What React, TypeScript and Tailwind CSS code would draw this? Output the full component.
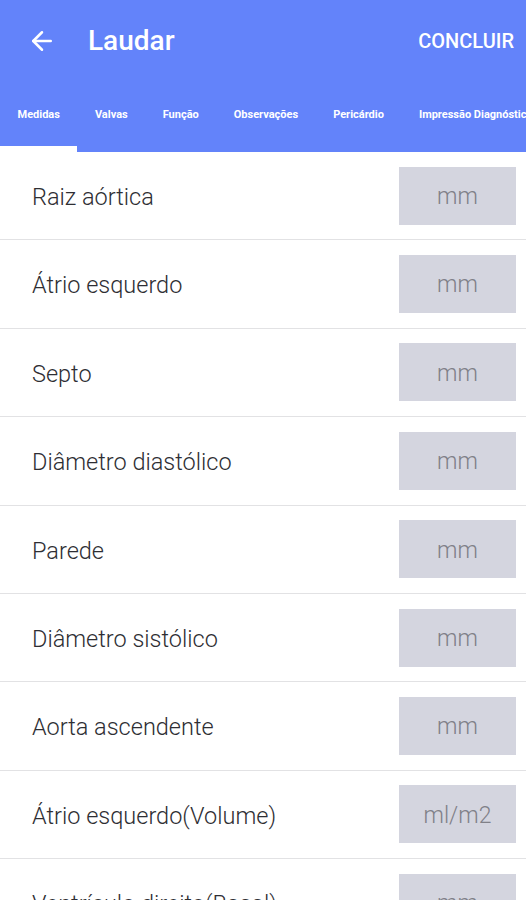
import { ArrowLeft } from "lucide-react";

const tabs = ["Medidas", "Valvas", "Função", "Observações", "Pericárdio", "Impressão Diagnóstica"];

const fields = [
    { label: "Raiz aórtica", unit: "mm" },
    { label: "Átrio esquerdo", unit: "mm" },
    { label: "Septo", unit: "mm" },
    { label: "Diâmetro diastólico", unit: "mm" },
    { label: "Parede", unit: "mm" },
    { label: "Diâmetro sistólico", unit: "mm" },
    { label: "Aorta ascendente", unit: "mm" },
    { label: "Átrio esquerdo(Volume)", unit: "ml/m2" },
    { label: "Ventrículo direito(Basal)", unit: "mm" },
];

export default function App() {
    return (
        <div className="w-[526px] h-[900px] overflow-hidden bg-white font-['Roboto',sans-serif]">
            {/* Header */}
            <header className="bg-[#6383fa] text-white">
                <div className="h-[82px] flex items-center pl-[27px] pr-[12px]">
                    <ArrowLeft className="w-[30px] h-[30px]" strokeWidth={2} />
                    <h1 className="ml-[31px] text-[28px] font-medium">Laudar</h1>
                    <button className="ml-auto text-[20px] font-medium">CONCLUIR</button>
                </div>
                <nav className="flex whitespace-nowrap overflow-hidden">
                    {tabs.map((tab, i) => (
                        <div key={tab} className="flex flex-col shrink-0">
                            <div className="h-[64px] pt-[2px] flex items-center px-[17.5px] text-[11px] font-bold">{tab}</div>
                            <div className={i === 0 ? "h-[6px] bg-white" : "h-[6px]"} />
                        </div>
                    ))}
                </nav>
            </header>

            {/* Fields */}
            <main>
                {fields.map((f) => (
                    <div key={f.label} className="h-[88.4px] flex items-center justify-between border-b border-[#e2e2e4] pl-[32px] pr-[10px]">
                        <span className="pt-[4px] text-[23.5px] font-light text-[#2e2e33]">{f.label}</span>
                        <div className="w-[117px] h-[58px] pt-[3px] bg-[#d4d5df] flex items-center justify-center text-[23px] font-light text-[#808088]">
                            {f.unit}
                        </div>
                    </div>
                ))}
            </main>
        </div>
    );
}
